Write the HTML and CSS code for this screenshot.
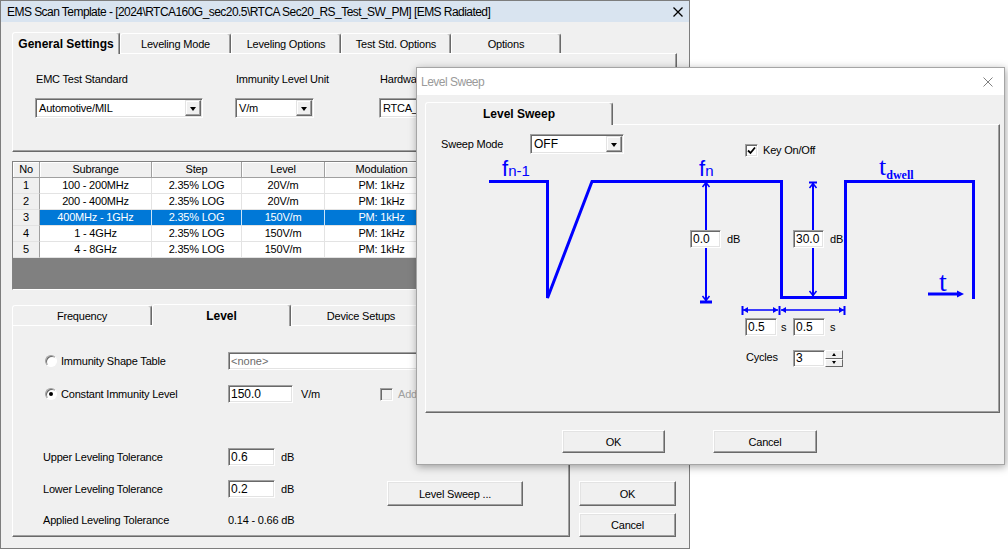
FILE: index.html
```html
<!DOCTYPE html>
<html lang="en">
<head>
<meta charset="utf-8">
<title>EMS Scan Template</title>
<link rel="stylesheet" href="styles.css">
</head>
<body>
<div class="win">
  <div class="titlebar">
    <span class="title">EMS Scan Template - [2024\RTCA160G_sec20.5\RTCA Sec20_RS_Test_SW_PM] [EMS Radiated]</span>
    <svg class="close" width="10" height="10" viewBox="0 0 10 10"><path d="M0.5 0.5 L9.5 9.5 M9.5 0.5 L0.5 9.5" stroke="#000" stroke-width="1.3"/></svg>
  </div>
  <div class="content">
    <div class="tabs">
      <div class="tab sel tw108">General Settings</div>
      <div class="tab tw111">Leveling Mode</div>
      <div class="tab tw110">Leveling Options</div>
      <div class="tab tw110">Test Std. Options</div>
      <div class="tab tw110">Options</div>
    </div>
    <div class="panel top-panel">
      <div class="field f1">
        <div class="flabel">EMC Test Standard</div>
        <div class="select s1"><span>Automotive/MIL</span><span class="drop"></span></div>
      </div>
      <div class="field f2">
        <div class="flabel">Immunity Level Unit</div>
        <div class="select s2"><span>V/m</span><span class="drop"></span></div>
      </div>
      <div class="field f3">
        <div class="flabel clip">Hardware Setup</div>
        <div class="select s3"><span>RTCA_160G</span><span class="drop"></span></div>
      </div>
    </div>

    <div class="grid">
      <table>
        <colgroup><col class="c-no"><col class="c-sub"><col class="c-step"><col class="c-lvl"><col class="c-mod"><col class="c-rest"></colgroup>
        <thead>
          <tr><th>No</th><th>Subrange</th><th>Step</th><th>Level</th><th>Modulation</th><th></th></tr>
        </thead>
        <tbody>
          <tr><td class="no">1</td><td>100 - 200MHz</td><td>2.35% LOG</td><td>20V/m</td><td>PM: 1kHz</td><td></td></tr>
          <tr><td class="no">2</td><td>200 - 400MHz</td><td>2.35% LOG</td><td>20V/m</td><td>PM: 1kHz</td><td></td></tr>
          <tr class="selrow"><td class="no">3</td><td>400MHz - 1GHz</td><td>2.35% LOG</td><td>150V/m</td><td>PM: 1kHz</td><td></td></tr>
          <tr><td class="no">4</td><td>1 - 4GHz</td><td>2.35% LOG</td><td>150V/m</td><td>PM: 1kHz</td><td></td></tr>
          <tr><td class="no">5</td><td>4 - 8GHz</td><td>2.35% LOG</td><td>150V/m</td><td>PM: 1kHz</td><td></td></tr>
        </tbody>
      </table>
    </div>

    <div class="lower">
      <div class="lower-left">
        <div class="tabs">
          <div class="tab tw140">Frequency</div>
          <div class="tab sel tw139">Level</div>
          <div class="tab tw140">Device Setups</div>
        </div>
        <div class="panel lower-panel">
          <div class="lrow r1">
            <div class="lcol"><span class="radio"></span><span>Immunity Shape Table</span></div>
            <div class="inp disabled w330">&lt;none&gt;</div>
          </div>
          <div class="lrow r2">
            <div class="lcol"><span class="radio on"></span><span>Constant Immunity Level</span></div>
            <div class="inp w65">150.0</div>
            <div class="unit">V/m</div>
            <span class="chk dis"></span><span class="dislabel">Add</span>
          </div>
          <div class="lrow r3">
            <div class="lcol plain">Upper Leveling Tolerance</div>
            <div class="inp w47">0.6</div>
            <div class="unit2">dB</div>
          </div>
          <div class="lrow r4">
            <div class="lcol plain">Lower Leveling Tolerance</div>
            <div class="inp w47">0.2</div>
            <div class="unit2">dB</div>
            <button class="btn sweep-btn">Level Sweep ...</button>
          </div>
          <div class="lrow r5">
            <div class="lcol plain">Applied Leveling Tolerance</div>
            <div>0.14 - 0.66 dB</div>
          </div>
        </div>
      </div>
      <div class="side">
        <button class="btn side-btn">OK</button>
        <button class="btn side-btn">Cancel</button>
      </div>
    </div>
  </div>
</div>

<div class="dlg">
  <div class="dtitle">
    <span>Level Sweep</span>
    <svg class="dclose" width="10" height="10" viewBox="0 0 10 10"><path d="M0.5 0.5 L9.5 9.5 M9.5 0.5 L0.5 9.5" stroke="#808080" stroke-width="1"/></svg>
  </div>
  <div class="dbody">
    <div class="dtabs"><div class="tab sel tw188">Level Sweep</div></div>
    <div class="panel dpanel">
      <div class="canvas">
        <svg class="diagram" width="573" height="287" viewBox="0 0 573 287">
          <g fill="none" stroke="#0000ff">
            <path d="M63 56.5 H121.5 V173 L166 56.5 H355.5 V172.5 H419.5 V56.5 H547.5 V174" stroke-width="3"/>
            <path d="M280 58 V176" stroke-width="2"/>
            <polyline points="276.5,62 280,57.5 283.5,62" stroke-width="1.5"/>
            <polyline points="276.5,171 280,175.5 283.5,171" stroke-width="1.5"/>
            <path d="M274 177 H286" stroke-width="3"/>
            <path d="M387 58 V171" stroke-width="2"/>
            <path d="M383 57.5 H391" stroke-width="2"/>
            <polyline points="383.5,63 387,58.5 390.5,63" stroke-width="1.5"/>
            <polyline points="383.5,166 387,170.5 390.5,166" stroke-width="1.5"/>
            <path d="M316 185 H352 M355 185 H419" stroke-width="1.5"/>
            <path d="M316.5 181 V190 M353.5 181 V190 M418.5 181 V190" stroke-width="2"/>
          </g>
          <g fill="#0000ff">
            <polygon points="317,185 322,182 322,188"/>
            <polygon points="352,185 347,182 347,188"/>
            <polygon points="355,185 360,182 360,188"/>
            <polygon points="418,185 413,182 413,188"/>
            <path d="M502 169 H533" stroke="#0000ff" stroke-width="3"/>
            <polygon points="538,169 531,165.5 531,172.5"/>
          </g>
          <text class="flabel-svg" x="76" y="51"><tspan class="big">f</tspan><tspan class="sub">n-1</tspan></text>
          <text class="flabel-svg" x="273" y="51"><tspan class="big">f</tspan><tspan class="sub">n</tspan></text>
          <text class="tlabel" x="453" y="50"><tspan class="tbig">t</tspan><tspan class="tsub" dy="4">dwell</tspan></text>
          <text class="tlabel" x="513" y="166"><tspan class="tbig2">t</tspan></text>
        </svg>
        <div class="box bx-a">0.0</div><span class="cl cl-a">dB</span>
        <div class="box bx-b">30.0</div><span class="cl cl-b">dB</span>
        <div class="box bx-c">0.5</div><span class="cl cl-c">s</span>
        <div class="box bx-d">0.5</div><span class="cl cl-d">s</span>
        <span class="cl cl-cyc">Cycles</span>
        <div class="box bx-e">3</div>
        <div class="spin"><span class="sp up"></span><span class="sp dn"></span></div>
      </div>
      <div class="dhead">
        <span class="dlabel">Sweep Mode</span>
        <div class="select s4"><span>OFF</span><span class="drop"></span></div>
        <span class="chk on key"><svg width="9" height="9" viewBox="0 0 9 9"><path d="M1 4.5 L3.5 7 L8 1.5" fill="none" stroke="#000" stroke-width="1.8"/></svg></span>
        <span class="keylabel">Key On/Off</span>
      </div>
    </div>
    <div class="dbuttons">
      <button class="btn dbtn">OK</button>
      <button class="btn dbtn">Cancel</button>
    </div>
  </div>
</div>
</body>
</html>
```
FILE: styles.css
```css
* { box-sizing: border-box; }
html, body { margin: 0; padding: 0; }
body {
  width: 1008px; height: 550px; overflow: hidden; position: relative;
  background: #fff;
  font-family: "Liberation Sans", Arial, sans-serif;
  font-size: 11px; color: #000; letter-spacing: -0.2px;
}

/* ---------- main window ---------- */
.win {
  width: 690px; height: 549px;
  background: #f0f0f0;
  border: 1px solid #7d7d7d;
}
.titlebar {
  height: 21px; background: #d9e4f0;
  display: flex; align-items: center; justify-content: space-between;
  padding: 0 6px 0 6px;
  font-size: 12px; letter-spacing: -0.55px;
}
.close { display: block; }
.content { padding: 10px 0 0 11px; }

.tabs { display: flex; height: 21px; align-items: flex-end; }
.tab {
  height: 20px;
  display: flex; align-items: center; justify-content: center;
  border: 1px solid; border-bottom: none;
  border-color: #fff #696969 transparent #fff;
  border-radius: 3px 3px 0 0;
  box-shadow: inset -1px 0 #a0a0a0;
  background: #f0f0f0;
  white-space: nowrap; overflow: hidden;
}
.tab.sel {
  height: 22px; margin-bottom: -1px; position: relative; z-index: 1;
  font-weight: bold; font-size: 12px; letter-spacing: 0;
}
.tw108 { width: 108px; } .tw110 { width: 110px; } .tw111 { width: 111px; }
.tw139 { width: 139px; } .tw140 { width: 140px; } .tw188 { width: 188px; }

.panel {
  border: 1px solid;
  border-color: #fff #696969 #696969 #fff;
  box-shadow: inset -1px -1px #a0a0a0;
  background: #f0f0f0;
}
.top-panel {
  width: 665px; height: 99px;
  display: flex; padding: 18px 0 0 22px;
}
.field { display: flex; flex-direction: column; gap: 12px; }
.flabel { line-height: 14px; padding-left: 1px; white-space: nowrap; }
.flabel.clip { width: 37px; overflow: hidden; }
.f1 { width: 200px; } .f2 { width: 144px; } .f3 { width: 280px; }

.select {
  height: 20px; background: #fff;
  display: flex; align-items: center;
  border: 1px solid; border-color: #a0a0a0 #fff #fff #a0a0a0;
  box-shadow: inset 1px 1px #696969, inset -1px -1px #e3e3e3;
  padding-left: 3px;
}
.s1 { width: 168px; } .s2 { width: 79px; } .s3 { width: 250px; } .s4 { width: 94px; font-size: 12px; letter-spacing: 0; }
.drop {
  margin-left: auto; margin-right: 1px;
  width: 16px; height: 16px;
  background: #f0f0f0;
  border: 1px solid; border-color: #e3e3e3 #696969 #696969 #e3e3e3;
  box-shadow: inset -1px -1px #a0a0a0, inset 1px 1px #fff;
  display: flex; align-items: center; justify-content: center;
}
.drop::after {
  content: ""; width: 0; height: 0;
  border-style: solid; border-width: 4px 3.5px 0 3.5px;
  border-color: #000 transparent transparent transparent;
  margin-top: 1px;
}

/* ---------- grid ---------- */
.grid {
  margin-top: 9px;
  width: 665px; height: 129px;
  border: 1px solid; border-color: #828282 #fff #fff #828282;
  background: #808080; overflow: hidden;
}
.grid table { border-collapse: separate; border-spacing: 0; table-layout: fixed; width: 514px; }
.c-no { width: 27px; } .c-sub { width: 112px; } .c-step { width: 90px; }
.c-lvl { width: 83px; } .c-mod { width: 114px; } .c-rest { width: 88px; }
.grid th, .grid td {
  padding: 0; height: 16px; line-height: 15px;
  text-align: center; white-space: nowrap; overflow: hidden;
  font-weight: normal;
}
.grid th {
  background: #f0f0f0;
  border-right: 1px solid #a0a0a0; border-bottom: 1px solid #a0a0a0;
  box-shadow: inset 1px 1px #fff;
}
.grid td {
  background: #fff;
  border-right: 1px solid #e3e3e3; border-bottom: 1px solid #e3e3e3;
}
.grid td.no { background: #f0f0f0; border-right: 1px solid #a0a0a0; border-bottom: 1px solid #e3e3e3; }
.grid tr.selrow td:not(.no) { background: #0078d7; color: #fff; border-right-color: #cde5f7; }

/* ---------- lower section ---------- */
.lower { display: flex; align-items: flex-end; margin-top: 14px; }
.lower-left { width: 558px; }
.lower-panel { height: 212px; padding: 26px 0 0 30px; }
.lrow { display: flex; align-items: center; height: 18px; }
.r2 { margin-top: 15px; }
.r3 { margin-top: 45px; }
.r4 { margin-top: 14px; align-items: flex-start; }
.r4 .lcol, .r4 .inp, .r4 .unit2 { height: 18px; display: flex; align-items: center; }
.r5 { margin-top: 13px; }
.lcol { width: 185px; display: flex; align-items: center; white-space: nowrap; }
.lcol .radio { margin-left: 2px; margin-right: 4px; }

.radio {
  width: 12px; height: 12px; border-radius: 50%;
  background: #fff;
  border: 1px solid; border-color: #a0a0a0 #fff #fff #a0a0a0;
  box-shadow: inset 1px 1px #696969;
  display: inline-flex; align-items: center; justify-content: center;
  flex: none;
}
.radio.on::after { content: ""; width: 4px; height: 4px; border-radius: 50%; background: #000; }

.inp {
  height: 18px; background: #fff;
  display: flex; align-items: center;
  border: 1px solid; border-color: #a0a0a0 #fff #fff #a0a0a0;
  box-shadow: inset 1px 1px #696969, inset -1px -1px #e3e3e3;
  padding-left: 2px; font-size: 12px; letter-spacing: 0;
}
.inp.disabled { color: #6d6d6d; font-size: 11px; }
.w330 { width: 330px; } .w65 { width: 65px; } .w47 { width: 47px; }
.unit { width: 87px; padding-left: 8px; }
.unit2 { width: 26px; padding-left: 6px; }
.dislabel { color: #a0a0a0; margin-left: 5px; white-space: nowrap; }

.chk {
  width: 13px; height: 13px; flex: none;
  background: #fff;
  border: 1px solid; border-color: #a0a0a0 #fff #fff #a0a0a0;
  box-shadow: inset 1px 1px #696969, inset -1px -1px #e3e3e3;
  display: inline-flex; align-items: center; justify-content: center;
}
.chk.dis { background: #f0f0f0; }
.chk svg { display: block; }

.btn {
  font-family: inherit; font-size: 11px; letter-spacing: -0.2px; color: #000;
  background: #f0f0f0;
  border: 1px solid; border-color: #fff #696969 #696969 #fff;
  box-shadow: inset -1px -1px #a0a0a0, inset 1px 1px #e3e3e3;
  display: flex; align-items: center; justify-content: center;
  padding: 0; margin: 0;
}
.sweep-btn { width: 136px; height: 25px; margin-left: 86px; margin-top: 1px; }
.side { display: flex; flex-direction: column; gap: 7px; margin-left: 9px; }
.side-btn { width: 97px; height: 25px; }
.side-btn + .side-btn { height: 24px; }

/* ---------- level sweep dialog ---------- */
.dlg {
  position: absolute; left: 416px; top: 67px;
  width: 589px; height: 398px;
  background: #f0f0f0;
  border: 1px solid #a5a5a5;
  box-shadow: 1px 2px 8px rgba(0,0,0,0.35);
}
.dtitle {
  height: 27px; background: #fff;
  display: flex; align-items: center; justify-content: space-between;
  padding: 0 11px 0 4px;
  color: #9a9a9a; font-size: 12px; letter-spacing: -0.5px;
}
.dclose { display: block; }
.dbody { padding: 7px 0 0 8px; }
.dtabs { display: flex; height: 22px; align-items: flex-end; }
.dtabs .tab.sel { height: 23px; }
.dpanel { width: 575px; height: 289px; position: relative; }
.dhead { display: flex; align-items: flex-start; padding: 9px 0 0 15px; position: relative; }
.dlabel { width: 89px; line-height: 20px; }
.key { margin-left: 121px; margin-top: 10px; }
.keylabel { margin-left: 5px; margin-top: 10px; line-height: 13px; }

.canvas { position: absolute; left: 0; top: 0; width: 573px; height: 287px; }
.diagram { position: absolute; left: 0; top: 0; }
.flabel-svg { fill: #0000ff; font-family: "Liberation Sans", Arial, sans-serif; letter-spacing: 0; }
.flabel-svg .big { font-size: 22px; }
.flabel-svg .sub { font-size: 15px; }
.tlabel { fill: #0000ff; font-family: "Liberation Serif", "Times New Roman", serif; letter-spacing: 0; }
.tlabel .tbig { font-size: 26px; }
.tlabel .tsub { font-size: 12px; font-weight: bold; }
.tlabel .tbig2 { font-size: 28px; }

.box {
  position: absolute; height: 18px;
  background: #fff;
  border: 1px solid; border-color: #a0a0a0 #fff #fff #a0a0a0;
  box-shadow: inset 1px 1px #696969, inset -1px -1px #e3e3e3;
  padding-left: 2px; font-size: 12px; letter-spacing: 0; line-height: 16px;
}
.bx-a { left: 264px; top: 105px; width: 31px; }
.bx-b { left: 367px; top: 105px; width: 31px; }
.bx-c { left: 319px; top: 193px; width: 32px; }
.bx-d { left: 367px; top: 193px; width: 32px; }
.bx-e { left: 367px; top: 225px; width: 32px; height: 17px; line-height: 15px; }
.cl { position: absolute; line-height: 14px; }
.cl-a { left: 301px; top: 107px; }
.cl-b { left: 404px; top: 107px; }
.cl-c { left: 355px; top: 195px; }
.cl-d { left: 404px; top: 195px; }
.cl-cyc { left: 320px; top: 225px; }
.spin { position: absolute; left: 399px; top: 225px; width: 18px; height: 17px; display: flex; flex-direction: column; }
.sp {
  flex: 1; background: #f0f0f0;
  border: 1px solid; border-color: #fff #696969 #696969 #fff;
  display: flex; align-items: center; justify-content: center;
}
.sp::after { content: ""; width: 0; height: 0; border-style: solid; }
.sp.up::after { border-width: 0 2.5px 3px 2.5px; border-color: transparent transparent #000 transparent; }
.sp.dn::after { border-width: 3px 2.5px 0 2.5px; border-color: #000 transparent transparent transparent; }

.dbuttons { display: flex; gap: 48px; padding-left: 137px; margin-top: 17px; }
.dbtn { width: 103px; height: 23px; }
.dbtn + .dbtn { width: 104px; }
```
